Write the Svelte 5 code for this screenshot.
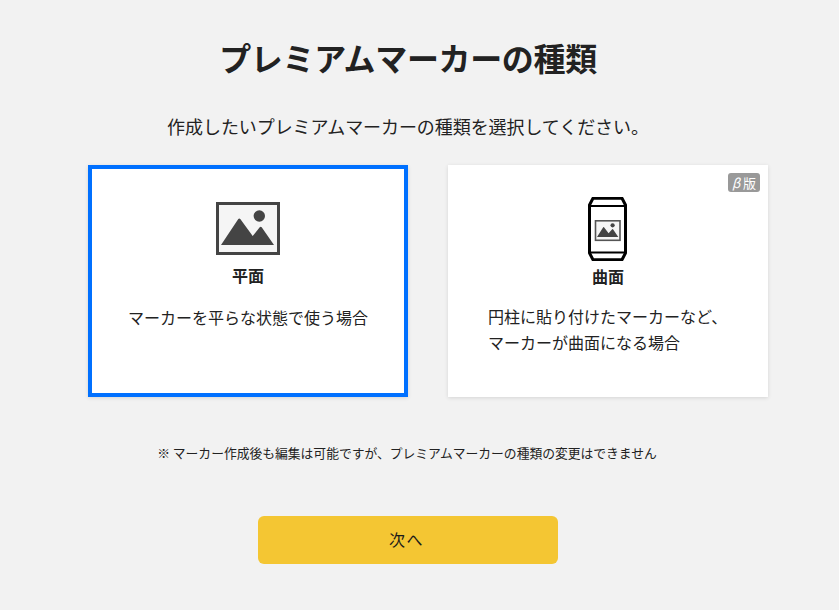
<script>
  const cards = [
    { key: 'flat', title: '平面', lines: ['マーカーを平らな状態で使う場合'], selected: true },
    { key: 'curved', title: '曲面', lines: ['円柱に貼り付けたマーカーなど、', 'マーカーが曲面になる場合'], beta: true }
  ];
</script>

<main class="page">
  <h1>プレミアムマーカーの種類</h1>
  <p class="lead">作成したいプレミアムマーカーの種類を選択してください。</p>
  <div class="cards">
    {#each cards as card (card.key)}
      <div class="card" class:selected={card.selected}>
        {#if card.beta}<span class="badge"><i>β</i> 版</span>{/if}
        <div class="icon">
          {#if card.key === 'flat'}
            <svg width="64" height="53" viewBox="0 0 64 53">
              <rect x="1.5" y="1.5" width="61" height="50" fill="#f5f5f5" stroke="#444" stroke-width="3"/>
              <circle cx="43.3" cy="14" r="5.7" fill="#444"/>
              <path d="M5 43 L22.300 17 Q23.300 15.800 24.300 17 L36.700 34 L43.700 25.300 Q44.700 24.200 45.700 25.300 L58 43 Z" fill="#444"/>
            </svg>
          {:else}
            <svg class="can" width="39" height="64" viewBox="0 0 39 64">
              <path d="M5 1.300 H34 L37.500 8 V56 L34 62.700 H5 L1.500 56 V8 Z" fill="#fff" stroke="#000" stroke-width="3" stroke-linejoin="round"/>
              <path d="M1.500 9 H37.500 M1.500 55.500 H37.500" stroke="#000" stroke-width="2"/>
              <rect x="7.500" y="23.800" width="24.500" height="19.500" fill="#f5f5f5" stroke="#555" stroke-width="1.600"/>
              <circle cx="24.600" cy="28.300" r="2.100" fill="#444"/>
              <path d="M9 40 L15.200 30.200 Q15.600 29.700 16 30.200 L20.600 36.300 L24.200 32.300 Q24.600 31.900 25 32.300 L30.300 40 Z" fill="#444"/>
            </svg>
          {/if}
        </div>
        <h2>{card.title}</h2>
        <div class="desc" class:left={card.lines.length > 1}>
          {#each card.lines as line}<p>{line}</p>{/each}
        </div>
      </div>
    {/each}
  </div>
  <p class="note">※ マーカー作成後も編集は可能ですが、プレミアムマーカーの種類の変更はできません</p>
  <button class="next" type="button">次へ</button>
</main>

<style>
  :global(body) {
    margin: 0;
    background: #f2f2f2;
  }
  .page {
    width: 816px;
    height: 610px;
    box-sizing: border-box;
    padding-top: 38px;
    display: flex;
    flex-direction: column;
    align-items: center;
    color: #222;
    font-family: "Noto Sans CJK JP", "Noto Sans", sans-serif;
    overflow: hidden;
  }
  h1 {
    margin: 0;
    font-size: 32px;
    line-height: 38px;
    font-weight: 700;
    letter-spacing: -0.35px;
  }
  .lead {
    margin: 37px 0 0;
    font-size: 18px;
    line-height: 26px;
    letter-spacing: -0.07px;
  }
  .cards {
    align-self: flex-start;
    display: flex;
    gap: 40px;
    margin: 26px 0 0 88px;
  }
  .card {
    position: relative;
    width: 320px;
    height: 232px;
    box-sizing: border-box;
    background: #fff;
    box-shadow: 0 1px 4px rgba(0, 0, 0, 0.12);
    display: flex;
    flex-direction: column;
    align-items: center;
    padding-top: 32px;
  }
  .card.selected {
    border: 4px solid #0070ff;
    padding-top: 33px;
  }
  .icon {
    height: 64px;
    display: flex;
    align-items: center;
    justify-content: center;
  }
  .can {
    margin-right: 1px;
  }
  .selected .icon {
    height: 53px;
  }
  .card h2 {
    margin: 3px 0 0;
    font-size: 16px;
    line-height: 24px;
    font-weight: 700;
  }
  .selected h2 {
    margin-top: 8px;
  }
  .desc {
    margin-top: 15px;
    font-size: 16px;
    line-height: 26px;
  }
  .selected .desc {
    margin-top: 17px;
  }
  .desc.left {
    align-self: flex-start;
    padding-left: 40px;
  }
  .desc p {
    margin: 0;
  }
  .badge {
    position: absolute;
    top: 8px;
    right: 8px;
    width: 32px;
    height: 19px;
    border-radius: 3px;
    background: #999;
    color: #fff;
    font-size: 13px;
    line-height: 19px;
    text-align: center;
    white-space: nowrap;
  }
  .badge i {
    font-weight: 400;
  }
  .note {
    margin: 46px 2px 0 0;
    font-size: 12.800px;
    line-height: 20px;
    letter-spacing: -0.02px;
  }
  .next {
    margin-top: 53px;
    width: 300px;
    height: 48px;
    border: 0;
    border-radius: 6px;
    background: #f4c633;
    color: #1a1a1a;
    font: inherit;
    font-size: 16px;
    letter-spacing: 1.500px;
    padding: 0 3px 3px 0;
  }
</style>
